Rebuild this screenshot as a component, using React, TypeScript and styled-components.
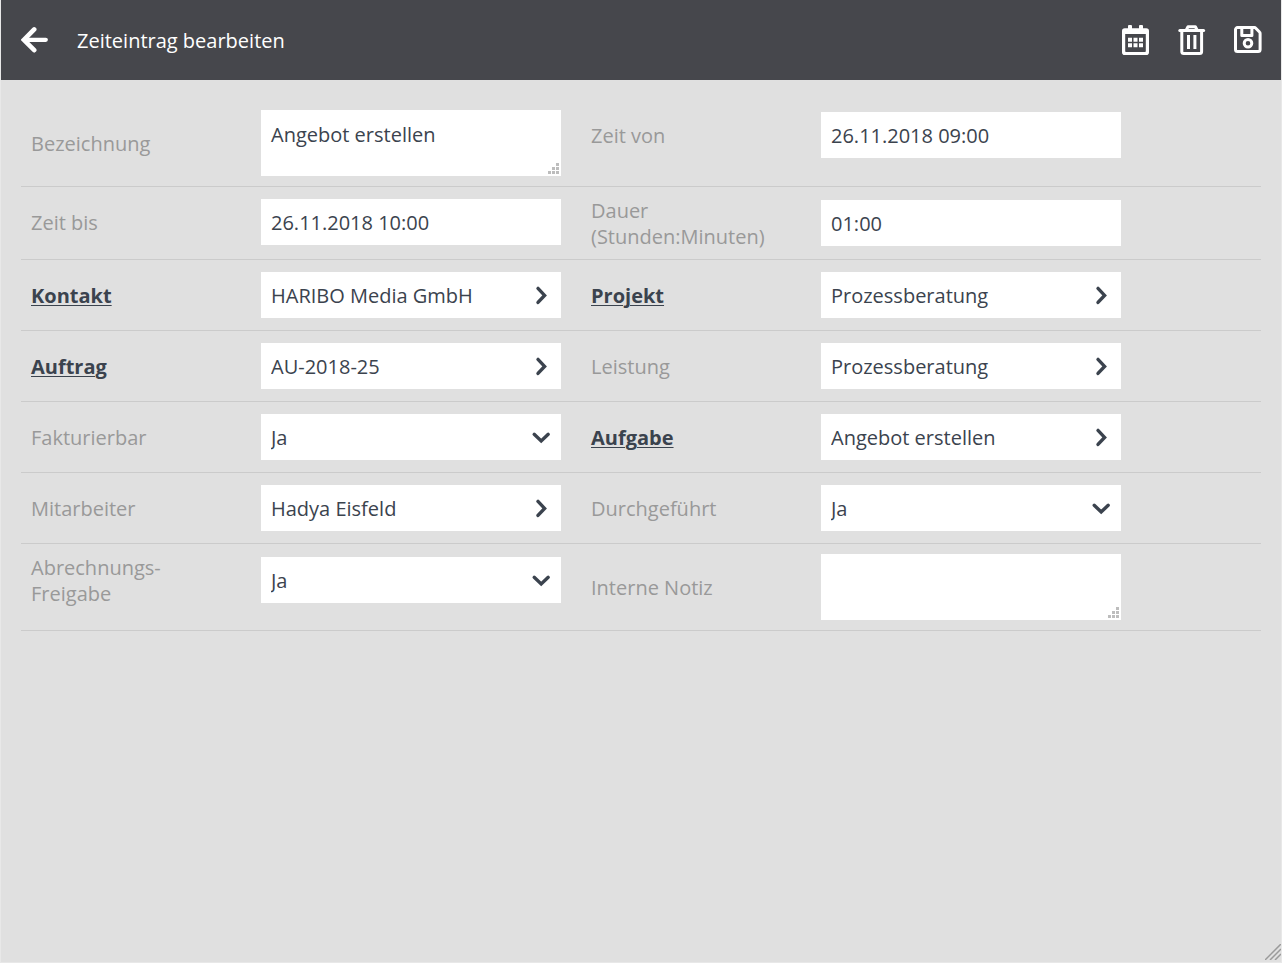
import React, { useId, useState } from 'react';
import styled, { createGlobalStyle, css } from 'styled-components';

const color = {
  header: '#46474c',
  page: '#e0e0e0',
  edge: '#e8e8e8',
  line: '#cbcbcb',
  label: '#999999',
  ink: '#3b434e',
  field: '#ffffff',
  grip: '#bdbdbd',
};

const GlobalStyle = createGlobalStyle`
  *, *::before, *::after { box-sizing: border-box; }
  body {
    margin: 0;
    background: ${color.page};
    font-family: "Open Sans", sans-serif;
    font-size: 20px;
    line-height: 26px;
    color: ${color.ink};
  }
`;

const Window = styled.div`
  position: relative;
  min-height: 100vh;
  border: 1px solid ${color.edge};
  border-top: 0;
  background: ${color.page};
`;

const Header = styled.header`
  display: flex;
  align-items: center;
  gap: 28px;
  height: 80px;
  padding: 0 19px 0 20px;
  background: ${color.header};
  color: #ffffff;
`;

const Title = styled.h1`
  flex: 1;
  margin: 0;
  padding-top: 2px;
  font-size: 20px;
  font-weight: 400;
  line-height: 28px;
`;

const IconButton = styled.button`
  display: flex;
  padding: 0;
  border: 0;
  background: none;
  color: inherit;
  cursor: pointer;
`;

const Form = styled.form`
  padding: 20px;
`;

const Row = styled.div`
  display: flex;
  align-items: flex-start;
  border-bottom: 1px solid ${color.line};
`;

const Cell = styled.div`
  display: flex;
  align-items: center;
  flex: 0 1 560px;
  min-width: 0;
  padding: 10px 20px 10px 10px;
`;

const LabelBox = styled.div`
  flex: 0 0 230px;
  margin: 1px 0 -1px;
  padding-right: 30px;
`;

const Label = styled.label`
  color: ${color.label};
`;

const LabelLink = styled.a`
  color: ${color.ink};
  font-weight: 700;
  text-decoration: underline;
  text-decoration-thickness: 1px;
  text-underline-offset: 2px;
`;

const Control = styled.div`
  position: relative;
  display: flex;
  flex: 1;
  min-width: 0;
  height: 46px;
  margin: 2px 0;
  background: ${color.field};
`;

const AreaControl = styled(Control)`
  height: 66px;
  margin: 0;
`;

const controlText = css`
  flex: 1;
  width: 100%;
  min-width: 0;
  margin: 0;
  border: 0;
  border-radius: 0;
  outline: 0;
  background: transparent;
  color: ${color.ink};
  font: inherit;
`;

const TextInput = styled.input`
  ${controlText}
  padding: 2px 10px 0;
`;

const TextArea = styled.textarea`
  ${controlText}
  padding: 12px 10px;
  resize: none;
`;

const Select = styled.select`
  ${controlText}
  padding: 2px 40px 0 10px;
  appearance: none;
`;

const PickButton = styled.button`
  display: flex;
  align-items: center;
  justify-content: center;
  flex: 0 0 40px;
  padding: 0;
  border: 0;
  background: none;
  color: inherit;
  cursor: pointer;
`;

const SelectMark = styled.span`
  position: absolute;
  top: 0;
  right: 0;
  display: flex;
  align-items: center;
  justify-content: center;
  width: 40px;
  height: 100%;
  pointer-events: none;
`;

const AreaGrip = styled.svg`
  position: absolute;
  right: 2px;
  bottom: 2px;
  pointer-events: none;
`;

const WindowGrip = styled.svg`
  position: absolute;
  right: 0;
  bottom: 2px;
`;

const BackIcon = () => (
  <svg width="28" height="32" viewBox="0 0 28 32" fill="none" stroke="currentColor" strokeWidth="4.6" strokeLinecap="round" strokeLinejoin="round" aria-hidden="true">
    <path d="M13.2 5.4 2.9 15.8 13.2 26.2" strokeLinejoin="miter" />
    <path d="M4.5 15.8H24.8" strokeWidth="4.2" />
  </svg>
);

const CalendarIcon = () => (
  <svg width="28" height="32" viewBox="0 0 28 32" fill="currentColor" aria-hidden="true">
    <path fillRule="evenodd" d="M6 2a1 1 0 0 1 1-1h2a1 1 0 0 1 1 1v2.3h7V2a1 1 0 0 1 1-1h2a1 1 0 0 1 1 1v2.3h3.2A2.8 2.8 0 0 1 27 7.1V28.2A2.8 2.8 0 0 1 24.2 31H2.8A2.8 2.8 0 0 1 0 28.2V7.1A2.8 2.8 0 0 1 2.8 4.3H6ZM3.2 10V27.2a.8.8 0 0 0 .8.8H23a.8.8 0 0 0 .8-.8V10Z" />
    <path d="M6 13.8h4v4H6zM11.5 13.8h4v4h-4zM17 13.8h4v4h-4zM6 19.2h4v4H6zM11.5 19.2h4v4h-4zM17 19.2h4v4h-4z" />
  </svg>
);

const TrashIcon = () => (
  <svg width="28" height="32" viewBox="0 0 28 32" fill="none" stroke="currentColor" strokeWidth="3" strokeLinecap="round" strokeLinejoin="round" aria-hidden="true">
    <path d="M1.8 6.6H25.6" />
    <path d="M8.3 6 10 2.8H17.4L19.1 6" />
    <path d="M3.8 7V27.5a2 2 0 0 0 2 2H21.6a2 2 0 0 0 2-2V7" />
    <path d="M10.5 11V25M16.9 11V25" strokeLinecap="butt" />
  </svg>
);

const SaveIcon = () => (
  <svg width="28" height="32" viewBox="0 0 28 32" fill="none" stroke="currentColor" strokeWidth="3" strokeLinejoin="round" aria-hidden="true">
    <path d="M3.5 3.6H20.4a2 2 0 0 1 1.4.6L25.5 8a2 2 0 0 1 .6 1.4V25.4a2 2 0 0 1-2 2H3.500a2 2 0 0 1-2-2V5.600a2 2 0 0 1 2-2Z" />
    <path d="M7.8 4V11.400H17.900V4" />
    <circle cx="14" cy="19.300" r="3.800" />
  </svg>
);

const ChevronRight = () => (
  <svg width="20" height="20" viewBox="0 0 20 20" fill="none" stroke="currentColor" strokeWidth="3.4" strokeLinecap="round" aria-hidden="true">
    <path d="M7 3.400 13.600 10.400 7 17.400" />
  </svg>
);

const ChevronDown = () => (
  <svg width="20" height="20" viewBox="0 0 20 20" fill="none" stroke="currentColor" strokeWidth="3.4" strokeLinecap="round" aria-hidden="true">
    <path d="M3.200 7.300 10.200 13.900 17.200 7.300" />
  </svg>
);

const Dots = () => (
  <AreaGrip width="11" height="11" viewBox="0 0 11 11" fill={color.grip} aria-hidden="true">
    <path d="M8 0h3v3H8zM4 4h3v3H4zM8 4h3v3H8zM0 8h3v3H0zM4 8h3v3H4zM8 8h3v3H8z" />
  </AreaGrip>
);

type FieldData = {
  label: string;
  value: string;
  kind: 'text' | 'area' | 'pick' | 'select';
  linked?: boolean;
};

const rows: FieldData[][] = [
  [
    { label: 'Bezeichnung', value: 'Angebot erstellen', kind: 'area' },
    { label: 'Zeit von', value: '26.11.2018 09:00', kind: 'text' },
  ],
  [
    { label: 'Zeit bis', value: '26.11.2018 10:00', kind: 'text' },
    { label: 'Dauer (Stunden:Minuten)', value: '01:00', kind: 'text' },
  ],
  [
    { label: 'Kontakt', value: 'HARIBO Media GmbH', kind: 'pick', linked: true },
    { label: 'Projekt', value: 'Prozessberatung', kind: 'pick', linked: true },
  ],
  [
    { label: 'Auftrag', value: 'AU-2018-25', kind: 'pick', linked: true },
    { label: 'Leistung', value: 'Prozessberatung', kind: 'pick' },
  ],
  [
    { label: 'Fakturierbar', value: 'Ja', kind: 'select' },
    { label: 'Aufgabe', value: 'Angebot erstellen', kind: 'pick', linked: true },
  ],
  [
    { label: 'Mitarbeiter', value: 'Hadya Eisfeld', kind: 'pick' },
    { label: 'Durchgeführt', value: 'Ja', kind: 'select' },
  ],
  [
    { label: 'Abrechnungs-Freigabe', value: 'Ja', kind: 'select' },
    { label: 'Interne Notiz', value: '', kind: 'area' },
  ],
];

function Field({ label, value: initial, kind, linked }: FieldData) {
  const id = useId();
  const [value, setValue] = useState(initial);
  const bind = {
    id,
    value,
    onChange: (e: React.ChangeEvent<HTMLInputElement | HTMLTextAreaElement | HTMLSelectElement>) =>
      setValue(e.target.value),
  };

  return (
    <Cell>
      <LabelBox>
        <Label htmlFor={id}>{linked ? <LabelLink href="#">{label}</LabelLink> : label}</Label>
      </LabelBox>
      {kind === 'area' && (
        <AreaControl>
          <TextArea {...bind} />
          <Dots />
        </AreaControl>
      )}
      {kind === 'text' && (
        <Control>
          <TextInput type="text" {...bind} />
        </Control>
      )}
      {kind === 'pick' && (
        <Control>
          <TextInput type="text" {...bind} />
          <PickButton type="button" aria-label={label}>
            <ChevronRight />
          </PickButton>
        </Control>
      )}
      {kind === 'select' && (
        <Control>
          <Select {...bind}>
            <option>Ja</option>
            <option>Nein</option>
          </Select>
          <SelectMark>
            <ChevronDown />
          </SelectMark>
        </Control>
      )}
    </Cell>
  );
}

export default function App() {
  return (
    <Window>
      <GlobalStyle />
      <Header>
        <IconButton type="button" aria-label="Zurück">
          <BackIcon />
        </IconButton>
        <Title>Zeiteintrag bearbeiten</Title>
        <IconButton type="button" aria-label="Kalender">
          <CalendarIcon />
        </IconButton>
        <IconButton type="button" aria-label="Löschen">
          <TrashIcon />
        </IconButton>
        <IconButton type="submit" form="entry" aria-label="Speichern">
          <SaveIcon />
        </IconButton>
      </Header>
      <Form id="entry" onSubmit={(e) => e.preventDefault()}>
        {rows.map((row) => (
          <Row key={row[0].label}>
            {row.map((field) => (
              <Field key={field.label} {...field} />
            ))}
          </Row>
        ))}
      </Form>
      <WindowGrip width="16" height="16" viewBox="0 0 16 16" fill="none" stroke="#9a9a9a" strokeWidth="1.5" aria-hidden="true">
        <path d="M0 16 16 0M5 16 16 5M10 16 16 10" />
      </WindowGrip>
    </Window>
  );
}
